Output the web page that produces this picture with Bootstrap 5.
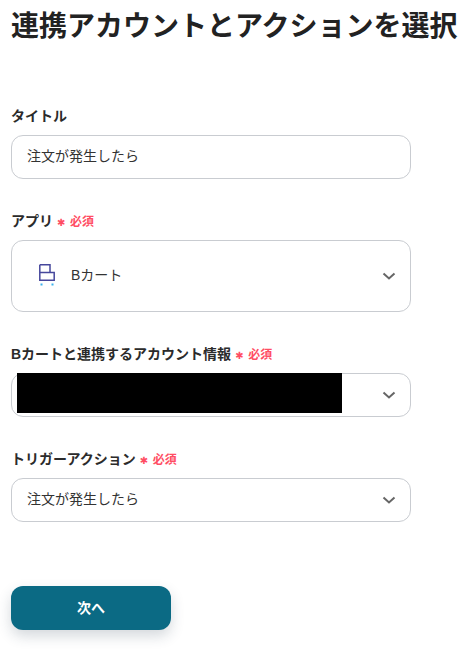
<!DOCTYPE html>
<html lang="ja">
<head>
<meta charset="utf-8">
<title>連携アカウントとアクションを選択</title>
<link href="https://cdn.jsdelivr.net/npm/bootstrap@5.3.0/dist/css/bootstrap.min.css" rel="stylesheet">
<style>
html, body { height: 658px; overflow: hidden; background: #fff; }
body { font-family: "Liberation Sans", "Noto Sans CJK JP", sans-serif; color: #2b2b2b; padding: 0 11px; }
.page-title { font-size: 28px; font-weight: 700; line-height: 28px; margin: 13px 0 0; white-space: nowrap; color: #222; }
.form-stack { width: 400px; padding-top: 65px; }
.field-label { font-size: 14px; font-weight: 700; line-height: 20px; height: 20px; margin-bottom: 9px; color: #2b2b2b; white-space: nowrap; }
.req { color: #ff4d63; font-size: 12px; font-weight: 700; margin-left: 4px; }
.req-star { font-size: 10px; margin-right: 3px; display: inline-block; width: 10px; font-family: "DejaVu Sans", sans-serif; line-height: 1; }
.field-box { height: 44px; border: 1px solid #c9ccd1; border-radius: 12px; padding: 0 15px 2px; font-size: 14px; color: #333; background: #fff; position: relative; }
.field-tall { height: 72px; padding-left: 27px; margin-bottom: 32px; }
.gap-a { margin-bottom: 32px; }
.gap-b { margin-bottom: 32px; }
.chev { position: absolute; right: 14px; top: 50%; margin-top: -4px; }
.redact { position: absolute; left: 5px; top: -1px; width: 325px; height: 40px; background: #000; }
.next-btn { width: 160px; height: 44px; margin-top: 64px; border: 0; border-radius: 12px; background: #0b6a84; color: #fff; font-size: 14px; font-weight: 700; box-shadow: 0 6px 14px rgba(40,60,80,.2); }
.next-btn:hover { background: #0b6a84; color: #fff; }
</style>
</head>
<body>
<h1 class="page-title">連携アカウントとアクションを選択</h1>
<form class="form-stack">
  <div class="field-label">タイトル</div>
  <div class="field-box d-flex align-items-center gap-a">注文が発生したら</div>

  <div class="field-label">アプリ<span class="req"><span class="req-star">✱</span>必須</span></div>
  <div class="field-box field-tall d-flex align-items-center">
    <svg width="16" height="22" viewBox="0 0 16 22" class="me-3 flex-shrink-0" aria-hidden="true">
      <path d="M.8.8H11V8.5M.8.8V16.2H15.2V8.5H.8" fill="none" stroke="#46479c" stroke-width="1.5"/>
      <rect x="1.5" y="19.5" width="2" height="2" fill="#3bb2ee"/><rect x="12.5" y="19.5" width="2" height="2" fill="#3bb2ee"/>
    </svg>
    <span>Bカート</span>
    <svg class="chev" width="14" height="8" viewBox="0 0 14 8" aria-hidden="true"><path d="M1.5 1.5 7 6.5 12.5 1.5" fill="none" stroke="#666" stroke-width="2"/></svg>
  </div>

  <div class="field-label">Bカートと連携するアカウント情報<span class="req"><span class="req-star">✱</span>必須</span></div>
  <div class="field-box gap-b">
    <div class="redact"></div>
    <svg class="chev" width="14" height="8" viewBox="0 0 14 8" aria-hidden="true"><path d="M1.5 1.5 7 6.5 12.5 1.5" fill="none" stroke="#666" stroke-width="2"/></svg>
  </div>

  <div class="field-label">トリガーアクション<span class="req"><span class="req-star">✱</span>必須</span></div>
  <div class="field-box d-flex align-items-center">
    注文が発生したら
    <svg class="chev" width="14" height="8" viewBox="0 0 14 8" aria-hidden="true"><path d="M1.5 1.5 7 6.5 12.5 1.5" fill="none" stroke="#666" stroke-width="2"/></svg>
  </div>

  <button type="button" class="btn next-btn">次へ</button>
</form>
<script src="https://cdn.jsdelivr.net/npm/bootstrap@5.3.0/dist/js/bootstrap.bundle.min.js"></script>
</body>
</html>
